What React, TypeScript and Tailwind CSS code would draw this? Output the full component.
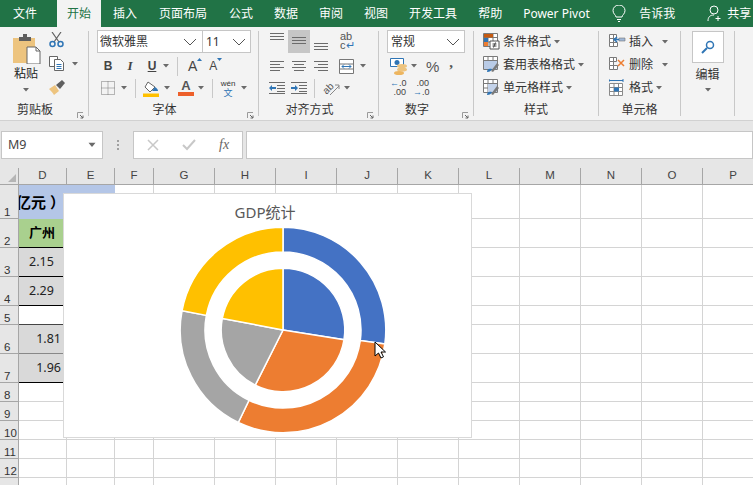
import React from "react";

const tabs = [
  { name: "插入", cls: "ml-[12px] mr-[22px]" },
  { name: "页面布局", cls: "mr-[22px]" },
  { name: "公式", cls: "mr-[21px]" },
  { name: "数据", cls: "mr-[21px]" },
  { name: "审阅", cls: "mr-[21px]" },
  { name: "视图", cls: "mr-[21px]" },
  { name: "开发工具", cls: "mr-[21px]" },
  { name: "帮助", cls: "mr-[21px]" },
];

const cols = ["D", "E", "F", "G", "H", "I", "J", "K", "L", "M", "N", "O", "P"];
const rows = [1, 2, 3, 4, 5, 6, 7, 8, 9, 10, 11, 12, 13];

function Caret({ className = "" }: { className?: string }) {
  return (
    <svg width="6" height="4" viewBox="0 0 6 4" className={className}>
      <path d="M0 0h6L3 3.5z" fill="#6a6a6a" />
    </svg>
  );
}

function Chevron({ className = "" }: { className?: string }) {
  return (
    <svg width="14" height="8" viewBox="0 0 14 8" className={className}>
      <path d="M1 1l6 6 6-6" fill="none" stroke="#555" strokeWidth="1" />
    </svg>
  );
}

function Launcher() {
  return (
    <svg width="7" height="7" viewBox="0 0 7 7" className="absolute right-[4px] top-[85px]">
      <path d="M.5 6V.5H6" fill="none" stroke="#9a9a9a" />
      <path d="M3 3l3 3M6 3.5V6H3.5" fill="none" stroke="#666" />
    </svg>
  );
}

function Sep() {
  return <div className="w-px h-[85px] mt-[4px] bg-[#c8c8c8] shrink-0" />;
}

function MiniSep({ className = "" }: { className?: string }) {
  return <div className={"w-px h-[19px] bg-[#c8c8c8] " + className} />;
}

function Group({ w, label, launcher, children }: { w: string; label: string; launcher?: boolean; children: React.ReactNode }) {
  return (
    <div className={"relative h-[93px] shrink-0 flex flex-col " + w}>
      <div className="h-[73px] pt-[3px]">{children}</div>
      <div className={"h-[20px] flex items-center justify-center text-[12px] text-[#333] leading-none " + (launcher ? "pr-[18px]" : "")}>{label}</div>
      {launcher && <Launcher />}
    </div>
  );
}

function Lines({ kind }: { kind: "left" | "center" | "right" | "plain" }) {
  const ds = {
    plain: "M0 .5h14M0 3.5h14M0 6.5h14",
    left: "M0 .5h14M0 3.5h10M0 6.5h14M0 9.5h10",
    center: "M0 .5h14M2 3.5h10M0 6.5h14M2 9.5h10",
    right: "M0 .5h14M4 3.5h10M0 6.5h14M4 9.5h10",
  };
  return (
    <svg width="14" height="10" viewBox="0 0 14 10">
      <path d={ds[kind]} stroke="#6b6b6b" fill="none" />
    </svg>
  );
}

function Indent({ flip }: { flip?: boolean }) {
  return (
    <svg width="16" height="12" viewBox="0 0 16 12">
      <path d="M0 .5h16M8 3.5h8M8 6.5h8M0 11.5h16M8 9.5h8" stroke="#6b6b6b" fill="none" />
      {flip ? (
        <path d="M0 5h4V3l3 3-3 3V7H0z" fill="#2f75b5" />
      ) : (
        <path d="M7 5H3V3L0 6l3 3V7h4z" fill="#2f75b5" />
      )}
    </svg>
  );
}

function TableIcon({ accent }: { accent: "cond" | "table" | "cell" }) {
  return (
    <svg width="17" height="17" viewBox="0 0 17 17">
      <path d="M.5.5h14v13H.5zM.5 4.5h14M.5 9h14M5 .5v13M10 .5v13" fill="#fff" stroke="#7a7a7a" />
      {accent === "cond" && (
        <>
          <path d="M1 1h9v3.5H1z" fill="#c55a11" />
          <path d="M1 5h4v4H1z" fill="#2f75b5" />
          <path d="M1 9h4v4H1z" fill="#ed7d31" />
          <path d="M7 8h9v8H7z" fill="#fff" stroke="#555" />
          <path d="M9.5 11h4M9.5 13h4M12.5 9.5l-2 5" stroke="#444" fill="none" />
        </>
      )}
      {accent === "table" && (
        <>
          <path d="M1 5h13v8H1z" fill="#b9cbe6" />
          <path d="M8 15l6-8 2 2-6 7z" fill="#7a7a7a" />
          <path d="M4 16c0-3 2-4 5-3-1 2-2 3-5 3z" fill="#2f75b5" />
        </>
      )}
      {accent === "cell" && (
        <>
          <path d="M5 5h9v8H5z" fill="#c4d3ea" />
          <path d="M8 15l6-8 2 2-6 7z" fill="#7a7a7a" />
          <path d="M4 16c0-3 2-4 5-3-1 2-2 3-5 3z" fill="#2f75b5" />
        </>
      )}
    </svg>
  );
}

function CellIcon({ kind }: { kind: "insert" | "delete" | "format" }) {
  return (
    <svg width="17" height="17" viewBox="0 0 17 17">
      {kind === "format" ? (
        <>
          <path d="M.5 4.5h13v12H.5zM.5 8.5h13M.5 12.5h13M5 4.5v12M9.5 4.5v12" fill="#fff" stroke="#8a8a8a" />
          <path d="M5 8.5h5v4H5z" fill="#2f75b5" />
          <path d="M0 1.5h14M0 0v3M14 0v3" stroke="#2f75b5" fill="none" />
        </>
      ) : (
        <>
          <path d="M.5 1.5h7v4h-7zM.5 5.5h4v4h-4zM.5 9.5h4v4h-4zM4.5 9.5h4v4h-4zM4.5 1.5v4" fill="#fff" stroke="#7a7a7a" />
          {kind === "insert" ? (
            <>
              <path d="M10 5h6v3h-6z" fill="#9fb7d8" stroke="#777" strokeWidth=".6" />
              <path d="M10 6.5H6M8 4L5 6.5 8 9" stroke="#2f75b5" strokeWidth="1.5" fill="none" />
            </>
          ) : (
            <path d="M9 4l6 6M15 4l-6 6" stroke="#ed7d31" strokeWidth="1.5" fill="none" />
          )}
        </>
      )}
    </svg>
  );
}

function polar(r: number, deg: number) {
  const a = (deg * Math.PI) / 180;
  return [105 + r * Math.sin(a), 105 - r * Math.cos(a)].map((n) => n.toFixed(2)).join(" ");
}

function slice(r0: number, r1: number, from: number, to: number) {
  const large = to - from > 180 ? 1 : 0;
  const outer = `M${polar(r1, from)}A${r1} ${r1} 0 ${large} 1 ${polar(r1, to)}`;
  if (r0 === 0) return `${outer}L105 105Z`;
  return `${outer}L${polar(r0, to)}A${r0} ${r0} 0 ${large} 0 ${polar(r0, from)}Z`;
}

// outer ring and inner pie have slightly different shares
const colors = ["#4472c4", "#ed7d31", "#a5a5a5", "#ffc000"];
const outerStops = [0, 97.8, 205.8, 280.8, 360];
const innerStops = [0, 99, 206.7, 280.8, 360];

function Donut() {
  return (
    <svg width="210" height="210" viewBox="0 0 210 210" className="ml-[114px]">
      {colors.map((color, i) => (
        <g key={color} stroke="#fff" strokeWidth="1.5">
          <path d={slice(78, 102.8, outerStops[i], outerStops[i + 1])} fill={color} />
          <path d={slice(0, 61.8, innerStops[i], innerStops[i + 1])} fill={color} />
        </g>
      ))}
    </svg>
  );
}

function Cell({ row, col }: { row: number; col: string }) {
  if (col === "D" || col === "E") {
    if (row === 1 && col === "D") {
      return <div className="bg-[#b4c6e7] flex items-center justify-end overflow-hidden whitespace-nowrap pr-[2px] text-[15px] font-bold text-black min-w-0">亿元 ）</div>;
    }
    if (row === 1) return <div className="bg-[#b4c6e7]" />;
    if (row === 2 && col === "D") {
      return <div className="bg-[#a9d08e] border-b border-black flex items-center pl-[10px] text-[13px] font-bold text-black">广州</div>;
    }
    if (col === "D" && (row === 3 || row === 4)) {
      return <div className="bg-[#d9d9d9] border-b border-black flex items-center pl-[10px] text-[12.5px] text-[#222]">{row === 3 ? "2.15" : "2.29"}</div>;
    }
    if (col === "D" && row === 5) return <div className="bg-white border-b border-[#444]" />;
    if (col === "D" && row === 6) {
      return <div className="bg-[#d9d9d9] border-b border-[#888] flex items-center justify-end pr-[6px] text-[12.5px] text-[#222]">1.81</div>;
    }
    if (col === "D" && row === 7) {
      return <div className="bg-[#d9d9d9] border-b border-black flex items-center justify-end pr-[6px] text-[12.5px] text-[#222]">1.96</div>;
    }
  }
  return <div className="border-r border-b border-[#d4d4d4]" />;
}

export default function App() {
  return (
    <div className="w-[753px] h-[485px] overflow-hidden bg-white text-[12px] font-['Noto_Sans','Noto_Sans_CJK_SC',sans-serif]">
      {/* title tabs */}
      <div className="h-[27px] bg-[#217346] flex items-center text-white text-[12px] leading-none">
        <div className="ml-[13px] mr-[20px]">文件</div>
        <div className="h-full w-[44px] bg-[#f3f3f3] text-[#217346] flex items-center justify-center">开始</div>
        {tabs.map((t) => (
          <div key={t.name} className={t.cls}>{t.name}</div>
        ))}
        <div className="w-[68px] whitespace-nowrap">Power Pivot</div>
        <svg width="14" height="18" viewBox="0 0 14 18" className="ml-[21px]" fill="none" stroke="#fff">
          <path d="M4 12c0-2-3-3-3-6.5a6 5.5 0 0 1 12 0C13 9 10 10 10 12zM5 14.5h4M6 16.5h2" />
        </svg>
        <div className="ml-[13px]">告诉我</div>
        <svg width="16" height="17" viewBox="0 0 16 17" className="ml-[32px]" fill="none" stroke="#fff">
          <circle cx="7" cy="5" r="4" />
          <path d="M1 16c0-4 2-6 6-6M11 11v5M8.5 13.5h5" />
        </svg>
        <div className="ml-[4px] whitespace-nowrap">共享</div>
      </div>

      {/* ribbon */}
      <div className="h-[94px] bg-[#f3f3f3] border-b border-[#d1d1d1] flex text-[#333]">
        <Group w="w-[88px]" label="剪贴板" launcher>
          <div className="flex">
            <div className="ml-[12px] w-[28px] flex flex-col items-center">
              <svg width="29" height="30" viewBox="0 0 29 30" className="mt-[4px] shrink-0">
                <path d="M1 4h22v25H1z" fill="#edc47f" />
                <path d="M7 3h4V0h4v3h4v4H7z" fill="#5f5f5f" />
                <path d="M15 13h9l4 4v13H15z" fill="#fff" stroke="#666" />
                <path d="M24 13v4h4" fill="none" stroke="#666" />
              </svg>
              <div className="mt-[4px] text-[12px] leading-none text-[#222] whitespace-nowrap">粘贴</div>
              <Caret className="mt-[8px]" />
            </div>
            <div className="ml-[9px] flex flex-col">
              <svg width="16" height="16" viewBox="0 0 16 16" className="mt-[2px]" fill="none">
                <path d="M3 0l7 10M12 0L5 10" stroke="#606060" strokeWidth="1.2" />
                <circle cx="3.5" cy="12" r="2.5" stroke="#2f75b5" strokeWidth="1.5" />
                <circle cx="11.5" cy="12" r="2.5" stroke="#2f75b5" strokeWidth="1.5" />
              </svg>
              <div className="flex items-center mt-[8px]">
                <svg width="16" height="15" viewBox="0 0 16 15" fill="#fff" stroke="#666">
                  <path d="M.5.5h8v10h-8z" />
                  <path d="M5.5 3.5h6l3 3v8h-9z" />
                  <path d="M7.5 8.5h5M7.5 10.5h5M7.5 12.5h5" stroke="#2f75b5" />
                </svg>
                <Caret className="ml-[7px]" />
              </div>
              <svg width="17" height="15" viewBox="0 0 17 15" className="mt-[9px]">
                <path d="M0 9l6-4 4 6-5 4C4 13 2 11 0 9z" fill="#edc47f" />
                <path d="M7 5l6-5 3 3-5 6z" fill="#5f5f5f" />
              </svg>
            </div>
          </div>
        </Group>
        <Sep />
        <Group w="w-[169px]" label="字体" launcher>
          <div className="flex ml-[8px]">
            <div className="w-[106px] h-[23px] bg-white border border-[#c6c6c6] flex items-center justify-between pl-[2px] pr-[5px] text-[12px] text-[#333]">
              <span>微软雅黑</span>
              <Chevron />
            </div>
            <div className="w-[48px] h-[23px] bg-white border border-l-0 border-[#c6c6c6] flex items-center justify-between pl-[3px] pr-[4px] text-[12px] text-[#333]">
              <span>11</span>
              <Chevron />
            </div>
          </div>
          <div className="flex items-center h-[22px] mt-[2px] ml-[14px] text-[#444]">
            <span className="w-[10px] font-bold text-[12px] text-center font-['Liberation_Sans']">B</span>
            <span className="w-[10px] ml-[12px] italic font-['Liberation_Serif'] font-bold text-[13px] text-center">I</span>
            <span className="w-[10px] ml-[12px] font-bold underline text-[12px] text-center font-['Liberation_Sans']">U</span>
            <Caret className="ml-[6px]" />
            <MiniSep className="ml-[8px]" />
            <span className="ml-[10px] text-[14px] font-['Liberation_Sans'] relative">
              A
              <svg width="5" height="3" viewBox="0 0 5 3" className="absolute -right-[5px] top-[2px]"><path d="M0 3h5L2.5 0z" fill="#2f75b5" /></svg>
            </span>
            <span className="ml-[12px] text-[12px] font-['Liberation_Sans'] relative">
              A
              <svg width="5" height="3" viewBox="0 0 5 3" className="absolute -right-[5px] top-[1px]"><path d="M0 0h5L2.5 3z" fill="#2f75b5" /></svg>
            </span>
          </div>
          <div className="flex items-center h-[22px] ml-[12px]">
            <svg width="14" height="14" viewBox="0 0 14 14">
              <path d="M.5.5h13v13H.5zM.5 7h13M7 .5v13" fill="none" stroke="#777" strokeDasharray="1 1" />
            </svg>
            <Caret className="ml-[6px]" />
            <MiniSep className="ml-[8px]" />
            <svg width="17" height="17" viewBox="0 0 17 17" className="ml-[7px]">
              <path d="M5 2l7 5-5 5-5-5z" fill="#fff" stroke="#666" />
              <path d="M12 7c2 1 3 3 3 4H9z" fill="#2f75b5" />
              <path d="M0 13.5h16V17H0z" fill="#ffc000" />
            </svg>
            <Caret className="ml-[4px]" />
            <div className="ml-[8px] w-[16px] h-[18px] flex flex-col items-center">
              <span className="text-[13px] leading-[13px] font-bold font-['Liberation_Sans'] text-[#555]">A</span>
              <span className="w-full h-[4px] bg-[#ed5f2a]" />
            </div>
            <Caret className="ml-[4px]" />
            <MiniSep className="ml-[8px]" />
            <div className="ml-[7px] w-[16px] flex flex-col items-center leading-none">
              <span className="text-[8px] text-[#333] font-['Liberation_Sans']">wén</span>
              <span className="text-[9px] text-[#2f75b5]">文</span>
            </div>
            <Caret className="ml-[5px]" />
          </div>
        </Group>
        <Sep />
        <Group w="w-[119px]" label="对齐方式" launcher>
          <div className="flex items-start ml-[11px] h-[23px]">
            <div className="mt-[3px]"><Lines kind="plain" /></div>
            <div className="w-[22px] h-[23px] ml-[4px] bg-[#c6c6c6] flex items-center justify-center"><Lines kind="plain" /></div>
            <div className="mt-[13px] ml-[4px]"><Lines kind="plain" /></div>
            <div className="ml-[12px] w-[14px] leading-[9px] text-[11px] font-['Liberation_Sans'] text-[#555] mt-[2px]">
              ab
              <br />
              c<span className="text-[#2f75b5]">↵</span>
            </div>
          </div>
          <div className="flex items-center h-[22px] mt-[2px] ml-[11px]">
            <Lines kind="left" />
            <div className="ml-[8px]"><Lines kind="center" /></div>
            <div className="ml-[8px]"><Lines kind="right" /></div>
            <svg width="15" height="15" viewBox="0 0 15 15" className="ml-[11px]">
              <path d="M.5.5h14v14H.5zM.5 5h14M.5 10h14" fill="#fff" stroke="#777" />
              <path d="M3 7.5h9M5 5.5L3 7.5l2 2M10 5.5l2 2-2 2" fill="none" stroke="#2f75b5" />
            </svg>
            <Caret className="ml-[6px]" />
          </div>
          <div className="flex items-center h-[22px] ml-[10px]">
            <Indent />
            <div className="ml-[6px]"><Indent flip /></div>
            <MiniSep className="ml-[7px]" />
            <svg width="18" height="17" viewBox="0 0 18 17" className="ml-[7px] overflow-visible">
              <text x="1" y="12" fontSize="10" fill="#555" transform="rotate(-45 6 9)" fontFamily="Liberation Sans">ab</text>
              <path d="M8 15l9-9M13 5h4v4" stroke="#888" fill="none" />
            </svg>
            <Caret className="ml-[4px]" />
          </div>
        </Group>
        <Sep />
        <Group w="w-[94px]" label="数字" launcher>
          <div className="ml-[8px] w-[78px] h-[23px] bg-white border border-[#c6c6c6] flex items-center justify-between pl-[3px] pr-[4px] text-[12px]">
            <span>常规</span>
            <Chevron />
          </div>
          <div className="flex items-center h-[22px] mt-[2px] ml-[11px]">
            <svg width="18" height="19" viewBox="0 0 18 19">
              <path d="M.5 1.5h13v8H.5z" fill="#fff" stroke="#2f75b5" />
              <circle cx="7" cy="5.5" r="2.5" fill="#2f75b5" />
              <ellipse cx="12" cy="9" rx="5" ry="2" fill="#edc47f" />
              <ellipse cx="12" cy="12.5" rx="5" ry="2" fill="#edc47f" />
              <ellipse cx="9" cy="16" rx="5" ry="2" fill="#edb55f" />
            </svg>
            <Caret className="ml-[3px]" />
            <span className="ml-[9px] text-[15px] leading-none font-['Liberation_Sans'] text-[#555]">%</span>
            <span className="ml-[10px] -mt-[7px] text-[15px] leading-none font-bold font-['Liberation_Serif'] text-[#555]">,</span>
          </div>
          <div className="flex items-center h-[22px] ml-[11px]">
            <div className="w-[16px] text-[9px] leading-[9px] font-['Liberation_Sans'] text-[#444] text-right">
              <span className="text-[#2f75b5]">←</span>.0
              <br />
              .00
            </div>
            <div className="w-[16px] ml-[7px] text-[9px] leading-[9px] font-['Liberation_Sans'] text-[#444] text-right">
              .00
              <br />
              <span className="text-[#2f75b5]">→</span>.0
            </div>
          </div>
        </Group>
        <Sep />
        <Group w="w-[124px]" label="样式">
          <div className="flex flex-col pl-[9px] text-[12px] leading-none">
            <div className="flex items-center h-[23px]">
              <TableIcon accent="cond" />
              <span className="ml-[3px]">条件格式</span>
              <Caret className="ml-[3px]" />
            </div>
            <div className="flex items-center h-[23px]">
              <TableIcon accent="table" />
              <span className="ml-[3px]">套用表格格式</span>
              <Caret className="ml-[3px]" />
            </div>
            <div className="flex items-center h-[23px]">
              <TableIcon accent="cell" />
              <span className="ml-[3px]">单元格样式</span>
              <Caret className="ml-[3px]" />
            </div>
          </div>
        </Group>
        <Sep />
        <Group w="w-[81px]" label="单元格">
          <div className="flex flex-col pl-[10px] text-[12px] leading-none">
            <div className="flex items-center h-[23px]">
              <CellIcon kind="insert" />
              <span className="ml-[3px]">插入</span>
              <Caret className="ml-[9px]" />
            </div>
            <div className="flex items-center h-[23px]">
              <CellIcon kind="delete" />
              <span className="ml-[3px]">删除</span>
              <Caret className="ml-[9px]" />
            </div>
            <div className="flex items-center h-[23px]">
              <CellIcon kind="format" />
              <span className="ml-[3px]">格式</span>
              <Caret className="ml-[3px]" />
            </div>
          </div>
        </Group>
        <Sep />
        <Group w="w-[53px]" label="">
          <div className="flex flex-col items-center">
            <div className="w-[32px] h-[32px] mt-[1px] bg-white border border-[#c6c6c6] flex items-center justify-center">
              <svg width="14" height="14" viewBox="0 0 14 14" fill="none" stroke="#2f75b5">
                <circle cx="9" cy="5" r="3.5" strokeWidth="1.5" />
                <path d="M6 8l-5 5" strokeWidth="2" />
              </svg>
            </div>
            <span className="mt-[4px] text-[12px] leading-[16px]">编辑</span>
            <Caret className="mt-[5px]" />
          </div>
        </Group>
        <Sep />
      </div>

      {/* formula bar */}
      <div className="h-[47px] bg-[#e6e6e6] flex items-start pt-[10px] pl-[1px]">
        <div className="w-[102px] h-[28px] bg-white border border-[#c6c6c6] flex items-center justify-between pl-[6px] pr-[7px] text-[12.5px] text-[#444]">
          <span>M9</span>
          <Caret className="scale-125" />
        </div>
        <div className="w-[30px] h-[28px] flex flex-col items-center justify-center gap-[2px]">
          <span className="w-[2px] h-[2px] bg-[#a0a0a0]" />
          <span className="w-[2px] h-[2px] bg-[#a0a0a0]" />
          <span className="w-[2px] h-[2px] bg-[#a0a0a0]" />
        </div>
        <div className="w-[110px] h-[28px] bg-white border border-[#c6c6c6] flex items-center pl-[13px]">
          <svg width="12" height="12" viewBox="0 0 12 12"><path d="M1 1l10 10M11 1L1 11" stroke="#c8c8c8" strokeWidth="1.5" /></svg>
          <svg width="14" height="12" viewBox="0 0 14 12" className="ml-[23px]"><path d="M1 6l4 4 8-9" fill="none" stroke="#c8c8c8" strokeWidth="2" /></svg>
          <span className="ml-[23px] italic font-['Liberation_Serif'] text-[14px] leading-none text-[#666]">fx</span>
        </div>
        <div className="ml-[3px] flex-1 h-[28px] bg-white border border-[#c6c6c6]" />
      </div>

      {/* sheet */}
      <div className="relative">
        <div className="grid grid-cols-[19px_48px_48px_39px_61px_61px_61px_61px_61px_61px_61px_61px_61px_61px] grid-rows-[17px_34px_29px_29px_29px_19px_29px_29px_19px_19px_19px_19px_19px_19px]">
          <div className="bg-[#e6e6e6] border-r border-b border-[#a6a6a6] flex items-end justify-end p-[2px]">
            <svg width="8" height="8" viewBox="0 0 8 8"><path d="M8 0v8H0z" fill="#b5b5b5" /></svg>
          </div>
          {cols.map((c) => (
            <div key={c} className="bg-[#e6e6e6] border-r border-b border-[#a6a6a6] flex items-center justify-center text-[11.5px] leading-none text-[#444] font-['Liberation_Sans']">{c}</div>
          ))}
          {rows.map((r) => (
            <React.Fragment key={r}>
              <div className="bg-[#e6e6e6] border-r border-b border-[#a6a6a6] flex items-end pl-[4px] text-[11.5px] leading-[12px] text-[#333] font-['Liberation_Sans']">{r < 13 ? r : ""}</div>
              {cols.map((c) => (
                <Cell key={c} row={r} col={c} />
              ))}
            </React.Fragment>
          ))}
        </div>

        {/* chart floats over the cells */}
        <div className="absolute left-[63px] top-[25px] w-[409px] h-[245px] bg-white border border-[#d9d9d9]">
          <div className="h-[26px] mt-[5px] flex items-center justify-center pr-[5px] text-[15px] leading-none text-[#595959]">GDP统计</div>
          <Donut />
          <svg width="13" height="18" viewBox="0 0 13 18" className="absolute left-[310px] top-[147px]">
            <path d="M1 1v14l3.5-3 2.5 5 2.5-1.2L7 11h4.5z" fill="#fff" stroke="#000" />
          </svg>
        </div>
      </div>
    </div>
  );
}
